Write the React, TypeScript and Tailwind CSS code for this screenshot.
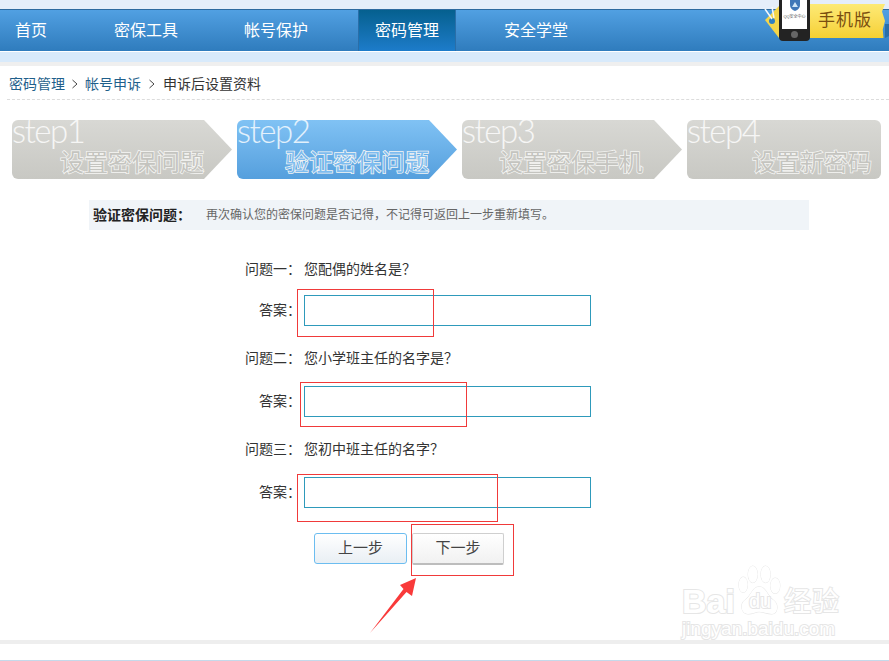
import React from 'react'

const navItems = ['首页', '密保工具', '帐号保护', '密码管理', '安全学堂']

const steps = [
  { step: 'step1', label: '设置密保问题', box: 'w-[220px] rounded-l-md pr-[28px] [clip-path:polygon(0_0,192px_0,100%_50%,192px_100%,0_100%)] bg-gradient-to-b from-[#d8d8d4] to-[#c8c8c3]', fill: 'text-[#c4c4bf]' },
  { step: 'step2', label: '验证密保问题', box: 'w-[220px] rounded-l-md pr-[28px] [clip-path:polygon(0_0,192px_0,100%_50%,192px_100%,0_100%)] bg-gradient-to-b from-[#80c2f4] to-[#559fdd]', fill: 'text-[#7dbcef]' },
  { step: 'step3', label: '设置密保手机', box: 'w-[220px] rounded-l-md pr-[39px] [clip-path:polygon(0_0,192px_0,100%_50%,192px_100%,0_100%)] bg-gradient-to-b from-[#d8d8d4] to-[#c8c8c3]', fill: 'text-[#c4c4bf]' },
  { step: 'step4', label: '设置新密码', box: 'w-[194px] rounded-md pr-[9px] bg-gradient-to-b from-[#d8d8d4] to-[#c8c8c3]', fill: 'text-[#c4c4bf]' },
]

const questions = [
  { title: '问题一：', text: '您配偶的姓名是？' },
  { title: '问题二：', text: '您小学班主任的名字是？' },
  { title: '问题三：', text: '您初中班主任的名字？' },
]

function PhoneBadge() {
  return (
    <div className="absolute left-[763px] top-0 h-[42px] w-[126px] flex overflow-hidden">
      <svg width="16" height="42" viewBox="0 0 16 42" className="shrink-0">
        <path d="M2 20 L16 6 L16 38 Z" fill="#f5d649" />
        <circle cx="9" cy="21" r="3" fill="#2f7fc4" />
        <path d="M2 9 L9 19 M9 7 L11 18" stroke="#f4f8fc" strokeWidth="1.5" fill="none" />
      </svg>
      <div className="w-[31px] h-[41px] shrink-0 bg-[#232323] rounded-b-[4px] flex flex-col items-center">
        <div className="w-[25px] h-[29px] bg-white flex flex-col items-center">
          <svg width="12" height="11" viewBox="0 0 12 11">
            <path d="M1 0 H11 V5 Q11 9 6 11 Q1 9 1 5 Z" fill="#3f78b8" />
            <path d="M6 2 L9 7 H3 Z" fill="#cfe6f6" />
          </svg>
          <span className="text-[4px] leading-[5px] mt-[3px] text-[#555] whitespace-nowrap">QQ安全中心</span>
        </div>
        <div className="w-[7px] h-[7px] rounded-full bg-[#666] mt-[2px]" />
      </div>
      <div className="mt-[4px] w-[75px] h-[34px] bg-gradient-to-b from-[#fdea74] to-[#f6d030] [clip-path:polygon(0_0,100%_0,96%_22%,100%_50%,97%_75%,98%_100%,0_100%)] flex items-center pl-[8px] text-[17px] tracking-[1px] text-[#7a4e10]">
        手机版
      </div>
      <svg width="4" height="42" viewBox="0 0 4 42" className="shrink-0">
        <path d="M0 24 H4 V36 L0 38 Z" fill="#2a6ea8" />
      </svg>
    </div>
  )
}

function Header() {
  return (
    <div className="relative">
      <div className="h-[9px] bg-[#e5eefa]" />
      <nav className="h-[42px] border-t border-[#2d6a9f] bg-gradient-to-b from-[#51a0e2] to-[#2f7cbd] flex gap-8">
        {navItems.map((item, i) => (
          <div
            key={item}
            className={`flex items-center text-[16px] text-white ${i === 0 ? 'w-[66px] pl-[15px]' : 'w-[98px] pl-4'} ${
              item === '密码管理' ? 'bg-gradient-to-b from-[#05608f] to-[#1d7cca] border-x border-[#2a6ea8]' : ''
            }`}
          >
            {item}
          </div>
        ))}
      </nav>
      <div className="h-px bg-white" />
      <div className="h-[10px] bg-[#d8eafb]" />
      <div className="h-[4px] bg-[#efefef]" />
      <PhoneBadge />
    </div>
  )
}

function Chevron({ className }: { className: string }) {
  return (
    <svg width="8" height="10" viewBox="0 0 8 10" className={className}>
      <path d="M1.5 1 L6 5 L1.5 9" stroke="#444" fill="none" />
    </svg>
  )
}

function Breadcrumb() {
  return (
    <div className="ml-[7px] h-[34px] border-b border-dashed border-[#dcdcdc] flex items-center pl-[2px] pt-[3px] text-[14px] text-[#333]">
      <span className="text-[#1f5f8b]">密码管理</span>
      <Chevron className="mx-[6px]" />
      <span className="text-[#1f5f8b]">帐号申诉</span>
      <Chevron className="mx-[7px]" />
      <span>申诉后设置资料</span>
    </div>
  )
}

function Steps() {
  return (
    <div className="flex gap-[5px] ml-[12px] mt-[20px]">
      {steps.map((s) => (
        <div key={s.step} className={`h-[59px] flex flex-col justify-between pb-[1px] ${s.box}`}>
          <div className="h-[20px] text-[33px] leading-[20px] tracking-[-1.5px] font-light text-white/80 font-['Lato',sans-serif]">
            {s.step}
          </div>
          <div className={`text-right text-[24px] leading-[30px] [-webkit-text-stroke:1.5px_#f6f6f4] [paint-order:stroke_fill] ${s.fill}`}>
            {s.label}
          </div>
        </div>
      ))}
    </div>
  )
}

function QuestionForm() {
  return (
    <div className="ml-[245px] mt-[26px] w-[346px] text-[14px] text-[#333]">
      {questions.map((q, i) => (
        <div key={q.title} className={i === 0 ? '' : 'mt-[19px]'}>
          <div className="h-[26px] leading-[26px] flex">
            <span className="w-[59px]">{q.title}</span>
            <span>{q.text}</span>
          </div>
          <div className={`flex items-center ${i === 0 ? 'mt-[13px]' : 'mt-[15px]'}`}>
            <span className="w-[59px] pl-[14px] whitespace-nowrap">答案：</span>
            <input className="w-[287px] h-[31px] border border-[#2e9abb] bg-white outline-none" />
          </div>
        </div>
      ))}
      <div className="flex gap-[5px] ml-[69px] mt-[25px]">
        <button className="w-[93px] h-[31px] rounded-[3px] border border-[#6cbdf0] bg-gradient-to-b from-[#ffffff] to-[#e9eff4] text-[15px] text-[#444]">
          上一步
        </button>
        <button className="w-[92px] h-[32px] rounded-[2px] border border-[#cfcfcf] border-b-2 border-b-[#bdbdbd] bg-gradient-to-b from-[#ffffff] to-[#f1f1f1] text-[15px] text-[#444]">
          下一步
        </button>
      </div>
    </div>
  )
}

function Annotations() {
  return (
    <>
      <div className="absolute left-[297px] top-[289px] w-[137px] h-[48px] border border-[#f03a3a]" />
      <div className="absolute left-[300px] top-[382px] w-[167px] h-[45px] border border-[#f03a3a]" />
      <div className="absolute left-[297px] top-[474px] w-[201px] h-[48px] border border-[#f03a3a]" />
      <div className="absolute left-[411px] top-[524px] w-[103px] h-[52px] border border-[#f03a3a]" />
      <svg width="60" height="70" viewBox="0 0 60 70" className="absolute left-[365px] top-[570px]">
        <path d="M51 8 L35 15 L38.5 19 L5 63 L41.5 22 L47 26 Z" fill="#f93a3a" />
      </svg>
    </>
  )
}

function Watermark() {
  return (
    <div className="absolute left-[682px] top-[565px] flex flex-col text-white [-webkit-text-stroke:2px_#e6e6e6] [paint-order:stroke_fill]">
      <div className="flex items-end h-[52px]">
        <span className="w-[54px] text-[34px] leading-[32px] font-bold">Bai</span>
        <div className="relative w-[48px] h-[52px] flex items-end justify-center">
          <svg width="48" height="52" viewBox="0 0 60 50" preserveAspectRatio="none" className="absolute inset-0" fill="#fff" stroke="#e6e6e6" strokeWidth="1">
            <ellipse cx="9" cy="19" rx="5.5" ry="7.5" />
            <ellipse cx="21" cy="9" rx="6" ry="8" />
            <ellipse cx="37" cy="9" rx="6" ry="8" />
            <ellipse cx="49" cy="20" rx="6" ry="7.5" />
            <path d="M29 21 C20 21 19 30 11 34 C4 38 7 47 15 47 C22 47 24 45 29 45 C34 45 38 47 45 47 C52 47 54 38 47 34 C39 30 38 21 29 21 Z" />
          </svg>
          <span className="relative text-[20px] leading-[24px] pb-[4px]">du</span>
        </div>
        <span className="text-[27px] leading-[30px] tracking-[1px]">经验</span>
      </div>
      <span className="mt-[1px] text-[19px] leading-[22px] whitespace-nowrap">jingyan.baidu.com</span>
    </div>
  )
}

export default function App() {
  return (
    <div className="relative w-[889px] h-[661px] overflow-hidden bg-white font-['Liberation_Sans','Noto_Sans_CJK_SC',sans-serif]">
      <Header />
      <Breadcrumb />
      <Steps />
      <div className="ml-[89px] mt-[21px] w-[720px] h-[30px] bg-[#f0f4f8] flex items-center pl-[4px]">
        <span className="w-[113px] text-[14px] font-bold text-[#222]">验证密保问题：</span>
        <span className="text-[12px] text-[#666]">再次确认您的密保问题是否记得，不记得可返回上一步重新填写。</span>
      </div>
      <QuestionForm />
      <div className="absolute left-0 top-[640px] w-full h-[4px] bg-[#eeeeee]" />
      <div className="absolute left-0 top-[660px] w-full h-px bg-[#c5d9ea]" />
      <Watermark />
      <Annotations />
    </div>
  )
}
